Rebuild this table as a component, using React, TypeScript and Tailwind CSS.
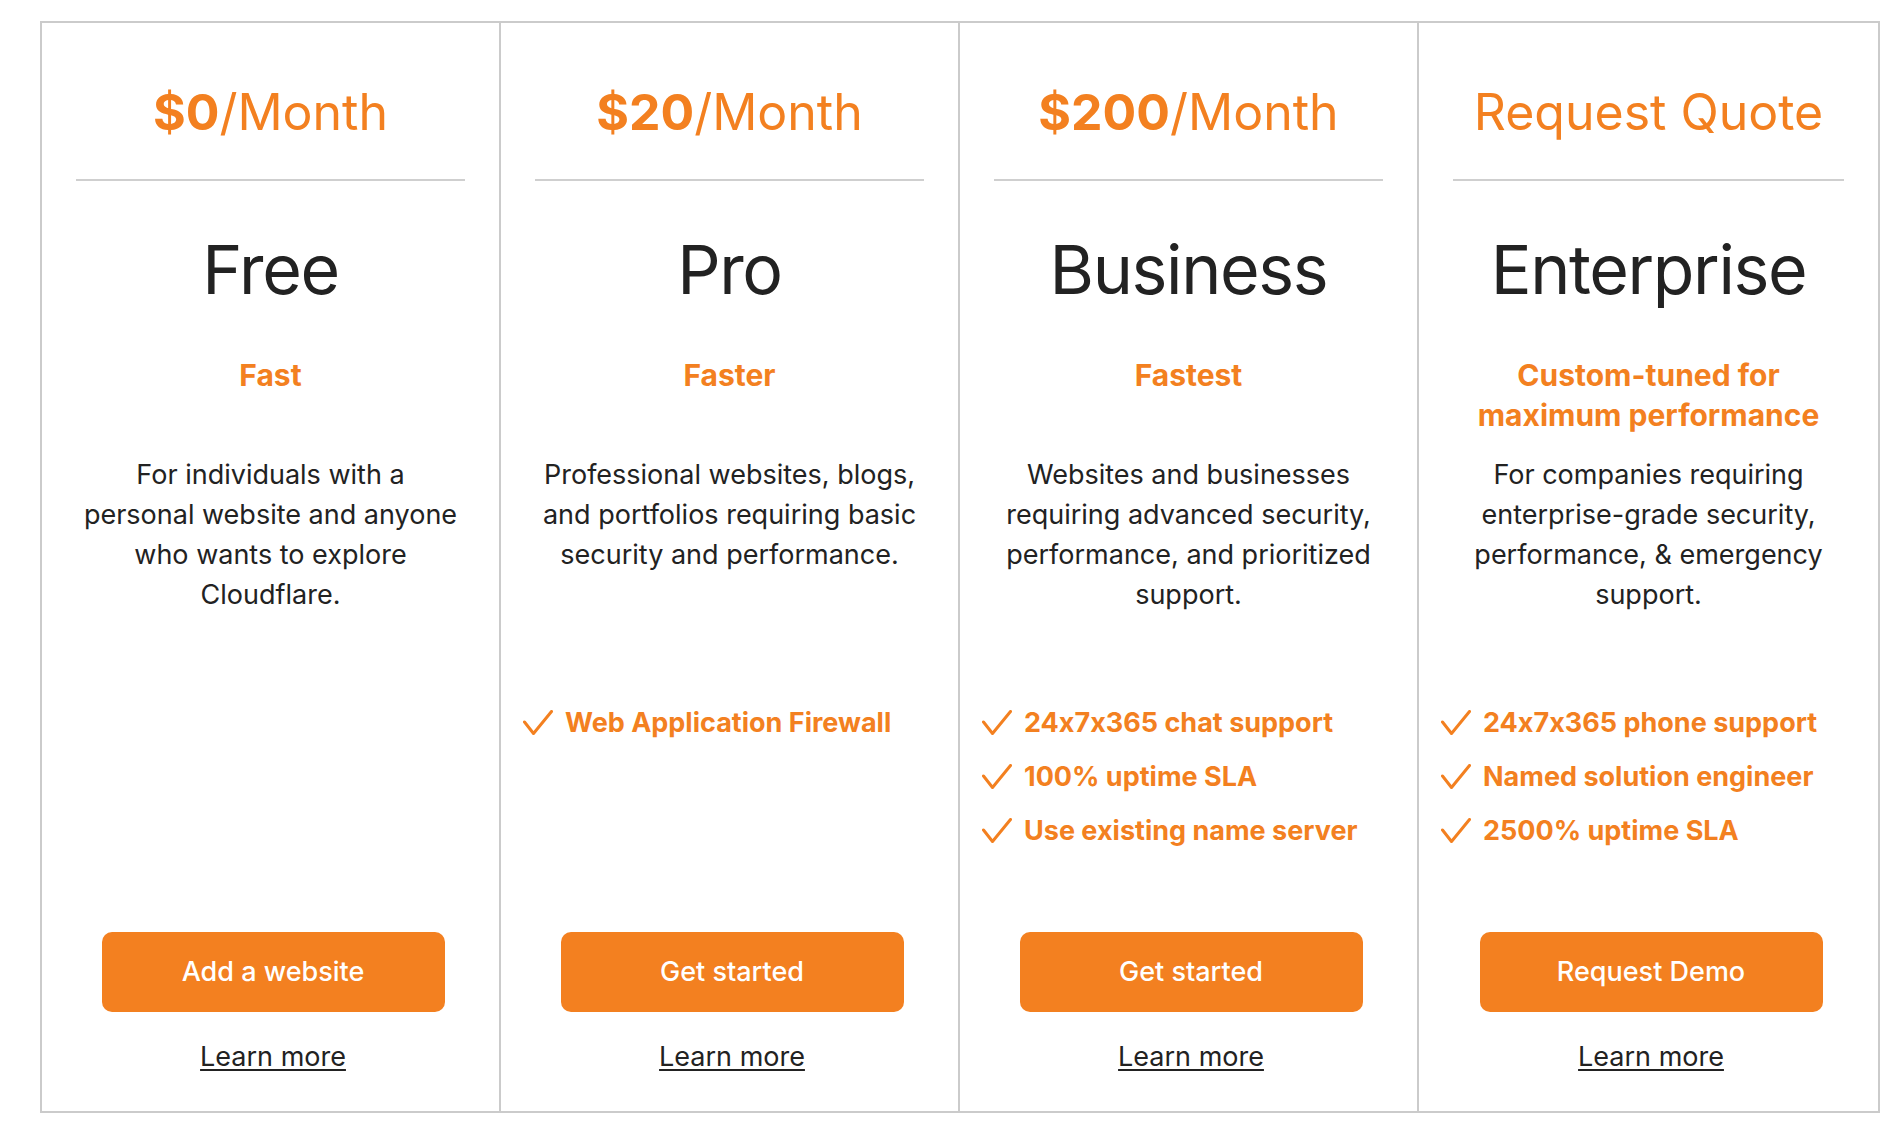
type Plan = {
  amount?: string;
  price: string;
  name: string;
  tagline: string[];
  description: string;
  features: string[];
  cta: string;
};

const plans: Plan[] = [
  {
    amount: '$0',
    price: '/Month',
    name: 'Free',
    tagline: ['Fast'],
    description: 'For individuals with a personal website and anyone who wants to explore Cloudflare.',
    features: [],
    cta: 'Add a website',
  },
  {
    amount: '$20',
    price: '/Month',
    name: 'Pro',
    tagline: ['Faster'],
    description: 'Professional websites, blogs, and portfolios requiring basic security and performance.',
    features: ['Web Application Firewall'],
    cta: 'Get started',
  },
  {
    amount: '$200',
    price: '/Month',
    name: 'Business',
    tagline: ['Fastest'],
    description: 'Websites and businesses requiring advanced security, performance, and prioritized support.',
    features: ['24x7x365 chat support', '100% uptime SLA', 'Use existing name server'],
    cta: 'Get started',
  },
  {
    price: 'Request Quote',
    name: 'Enterprise',
    tagline: ['Custom-tuned for', 'maximum performance'],
    description: 'For companies requiring enterprise-grade security, performance, & emergency support.',
    features: ['24x7x365 phone support', 'Named solution engineer', '2500% uptime SLA'],
    cta: 'Request Demo',
  },
];

const CheckMark = () => (
  <svg width="30" height="26" viewBox="0 0 30 26" fill="none" className="shrink-0">
    <polyline
      points="1.5,12 10.5,23.5 28.5,1.5"
      stroke="#f38020"
      strokeWidth="3"
      strokeLinecap="round"
      strokeLinejoin="round"
    />
  </svg>
);

const PlanColumn = ({ plan, last }: { plan: Plan; last: boolean }) => {
  return (
    <div className={`flex flex-col ${last ? '' : 'border-r-2 border-[#cbcbcb]'}`}>
      <div className="pt-[58px] text-center text-[50px] leading-[62px] text-[#f38020]">
        {plan.amount && <span className="font-bold">{plan.amount}</span>}
        {plan.price}
      </div>
      <div className="mx-[34px] mt-[36px] h-[2px] bg-[#cfcfcf]" />
      <h2 className="mt-[48px] text-center text-[68px] leading-[80px] tracking-[-0.02em] text-[#222222]">
        {plan.name}
      </h2>
      <div className="mt-[46px] min-h-[80px] text-center text-[30px] font-bold leading-[40px] text-[#f38020]">
        {plan.tagline.map((line) => (
          <div key={line}>{line}</div>
        ))}
      </div>
      <p className="mx-auto mt-[20px] min-h-[160px] max-w-[400px] px-[8px] text-center text-[27px] leading-[40px] text-[#222222]">
        {plan.description}
      </p>
      <ul className="mt-[81px] pl-[22px] [font-feature-settings:'calt'_0]">
        {plan.features.map((f) => (
          <li key={f} className="flex items-center gap-[12px] text-[27px] font-bold leading-[54px] text-[#f38020]">
            <CheckMark />
            <span>{f}</span>
          </li>
        ))}
      </ul>
      <div className="mt-auto flex flex-col items-center pb-[34px] pl-[5px]">
        <button className="h-[80px] w-[343px] rounded-[10px] bg-[#f38020] text-[27px] font-medium text-white">
          {plan.cta}
        </button>
        <a
          href="#"
          className="mt-[25px] text-[27px] leading-[40px] text-[#222222] underline decoration-2 underline-offset-[3px]"
        >
          Learn more
        </a>
      </div>
    </div>
  );
};

export default function App() {
  return (
    <div className="min-h-screen bg-white pt-[21px] font-['Inter',sans-serif]">
      <div className="ml-[40px] grid h-[1092px] w-[1840px] grid-cols-4 border-2 border-[#cbcbcb]">
        {plans.map((plan, i) => (
          <PlanColumn key={plan.name} plan={plan} last={i === plans.length - 1} />
        ))}
      </div>
    </div>
  );
}
